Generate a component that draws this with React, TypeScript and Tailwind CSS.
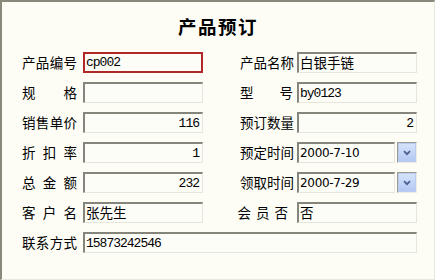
import React from "react";

const cjk = { fontFamily: '"Noto Sans CJK SC", sans-serif' };
const mono = { fontFamily: '"Liberation Mono", "Noto Sans CJK SC", monospace' };

function Label({
  chars,
  mode = "spread",
  w = "w-[55px]",
}: {
  chars: string[];
  mode?: "spread" | "loose";
  w?: string;
}) {
  return (
    <div
      className={`${w} flex items-center text-[13.5px] leading-none text-black ${
        mode === "spread" ? "justify-between" : "justify-end gap-[5px] pr-[5px]"
      }`}
      style={cjk}
    >
      {chars.map((c, i) => (
        <span key={i}>{c}</span>
      ))}
    </div>
  );
}

function Box({
  value = "",
  align = "left",
  red = false,
  cjkText = false,
  w = "w-[120px]",
}: {
  value?: string;
  align?: "left" | "right";
  red?: boolean;
  cjkText?: boolean;
  w?: string;
}) {
  return (
    <div
      className={`${w} h-[21px] flex items-center bg-[#fdfdf8] ${
        red
          ? "border-2 border-[#b02828]"
          : "border-t-2 border-l-2 border-b border-r border-t-[#85857b] border-l-[#85857b] border-b-[#e6e6dc] border-r-[#e6e6dc]"
      } ${align === "right" ? "justify-end pr-[3px]" : "pl-[1px]"}`}
    >
      <span
        className={`${cjkText ? "text-[13.5px]" : "text-[13px] tracking-[-1px]"} leading-none text-black`}
        style={cjkText ? cjk : mono}
      >
        {value}
      </span>
    </div>
  );
}

function DateBox({ value }: { value: string }) {
  return (
    <div className="w-[120px] h-[21px] flex items-center gap-[2px]">
      <div className="w-[98px] h-[21px] flex items-center pl-[1px] bg-[#fdfdf8] border-t-2 border-l-2 border-b border-r border-t-[#85857b] border-l-[#85857b] border-b-[#e6e6dc] border-r-[#e6e6dc]">
        <span
          className="text-[12px] leading-none text-black"
          style={{ fontFamily: '"DejaVu Sans", sans-serif', letterSpacing: "-0.3px" }}
        >
          {value}
        </span>
      </div>
      <div className="w-[20px] h-[21px] border-t border-l border-[#9a9a90] border-b border-r border-b-[#ecece4] border-r-[#ecece4] flex">
        <div className="flex-1 bg-gradient-to-b from-[#d6e2fb] to-[#b3c9f2] border border-[#b9cbef] flex items-center justify-center">
          <svg width="8" height="6" viewBox="0 0 8 6">
            <path d="M1 1.2 L4 4.2 L7 1.2" fill="none" stroke="#4a5f8e" strokeWidth="1.8" />
          </svg>
        </div>
      </div>
    </div>
  );
}

function LRow({ children }: { children: React.ReactNode }) {
  return <div className="flex items-center gap-[6px]">{children}</div>;
}

function RRow({ children }: { children: React.ReactNode }) {
  return <div className="flex items-center gap-[4px]">{children}</div>;
}

const RW = "w-[53px]";

export default function App() {
  return (
    <div
      className="w-[435px] h-[280px] bg-[#fdfdf6] border-t-2 border-l-2 border-[#8a8a7c] border-r border-b border-r-[#e8e8e0] border-b-[#e8e8e0] flex flex-col"
      style={cjk}
    >
      <div className="h-[50px] flex justify-center pt-[15px]">
        <span className="text-[18.5px] font-bold leading-none text-black tracking-[1.5px]">产品预订</span>
      </div>
      <div className="pl-[20px] flex flex-col gap-[9px]">
        <div className="flex gap-[37px]">
          <LRow><Label chars={["产", "品", "编", "号"]} /><Box value="cp002" red /></LRow>
          <RRow><Label w={RW} chars={["产", "品", "名", "称"]} /><Box value="白银手链" cjkText /></RRow>
        </div>
        <div className="flex gap-[37px]">
          <LRow><Label chars={["规", "格"]} /><Box /></LRow>
          <RRow><Label w={RW} chars={["型", "号"]} /><Box value="by0123" /></RRow>
        </div>
        <div className="flex gap-[37px]">
          <LRow><Label chars={["销", "售", "单", "价"]} /><Box value="116" align="right" /></LRow>
          <RRow><Label w={RW} chars={["预", "订", "数", "量"]} /><Box value="2" align="right" /></RRow>
        </div>
        <div className="flex gap-[37px]">
          <LRow><Label chars={["折", "扣", "率"]} /><Box value="1" align="right" /></LRow>
          <RRow><Label w={RW} chars={["预", "定", "时", "间"]} /><DateBox value="2000-7-10" /></RRow>
        </div>
        <div className="flex gap-[37px]">
          <LRow><Label chars={["总", "金", "额"]} /><Box value="232" align="right" /></LRow>
          <RRow><Label w={RW} chars={["领", "取", "时", "间"]} /><DateBox value="2000-7-29" /></RRow>
        </div>
        <div className="flex gap-[37px]">
          <LRow><Label chars={["客", "户", "名"]} /><Box value="张先生" cjkText /></LRow>
          <RRow><Label w={RW} chars={["会", "员", "否"]} mode="loose" /><Box value="否" cjkText /></RRow>
        </div>
        <div className="flex">
          <LRow><Label chars={["联", "系", "方", "式"]} /><Box value="15873242546" w="w-[334px]" /></LRow>
        </div>
      </div>
    </div>
  );
}
